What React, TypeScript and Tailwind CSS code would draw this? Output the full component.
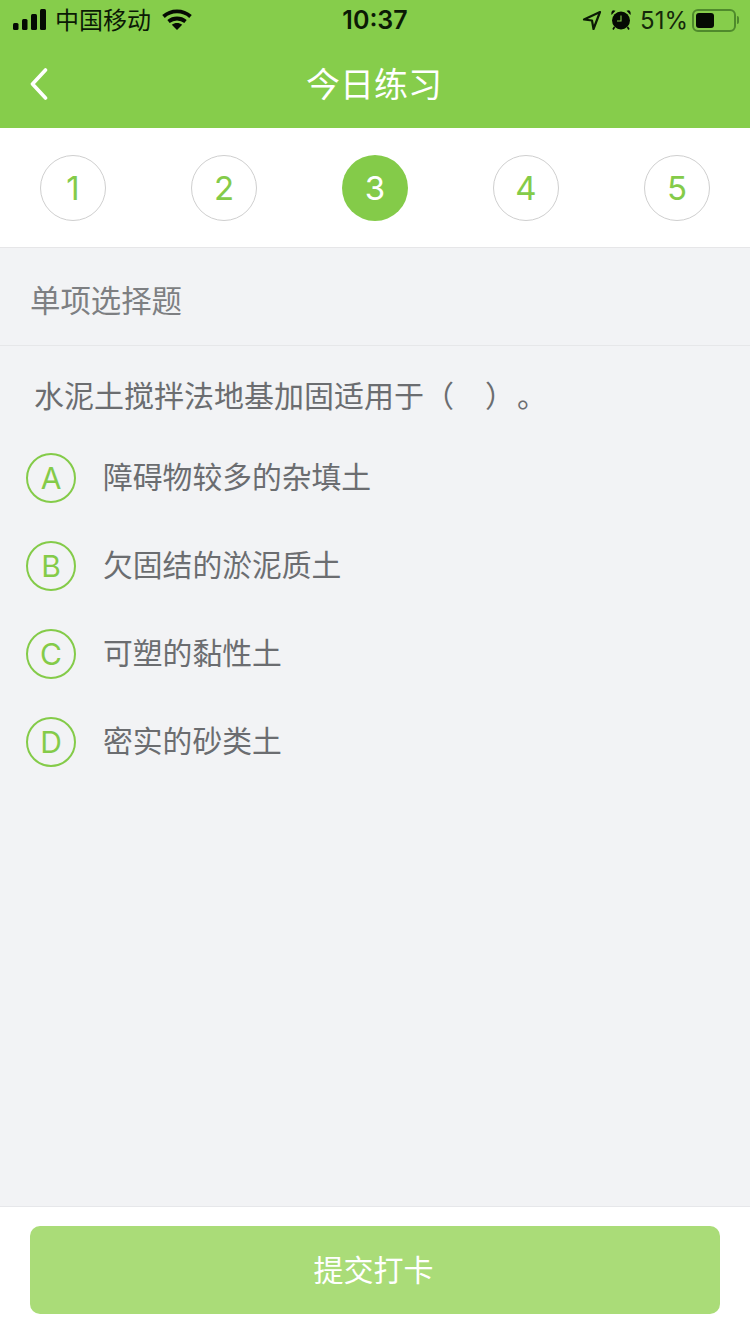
const FONT = "font-['Inter','Noto_Sans_CJK_SC',sans-serif]";

function StatusBar() {
  return (
    <div className="h-10 flex items-center justify-between relative text-[#0b1a05]">
      <div className="flex items-center pl-[13px]">
        <svg width="33" height="22" viewBox="0 0 33 22" fill="#050a03">
          <rect x="0" y="14" width="5.5" height="7" rx="1.5" />
          <rect x="9" y="10" width="5.5" height="11" rx="1.5" />
          <rect x="18" y="5" width="6" height="16" rx="1.5" />
          <rect x="27" y="0" width="6" height="21" rx="1.5" />
        </svg>
        <span className="ml-[9px] text-[24px] leading-none pt-[1px]">中国移动</span>
        <svg className="ml-[11px]" width="30" height="22" viewBox="0 0 30 22" fill="none" stroke="#050a03" strokeWidth="3.8">
          <path d="M1.5 7.5C9 0.7 21 0.7 28.5 7.5" />
          <path d="M6.5 12.5C11.5 8.5 18.5 8.5 23.5 12.5" />
          <path d="M15 21L9.8 15.8C12.8 13.4 17.2 13.4 20.2 15.8Z" fill="#050a03" stroke="none" />
        </svg>
      </div>
      <span className="absolute left-0 right-0 text-center text-[25px] font-semibold leading-none pointer-events-none pt-[1px]">10:37</span>
      <div className="flex items-center pr-[11px]">
        <svg width="20" height="21" viewBox="0 0 20 21" fill="none" stroke="#0b1a05" strokeWidth="2.2" strokeLinejoin="round">
          <path d="M18 2L2 9.5L10 10.5L11.5 19Z" />
        </svg>
        <svg className="ml-[8px]" width="22" height="22" viewBox="0 0 22 22" fill="#050a03">
          <circle cx="11" cy="11.5" r="9" />
          <path d="M1.5 6L5.5 1.8L3 1.2Q0.8 2.5 1.5 6ZM20.5 6L16.5 1.8L19 1.2Q21.2 2.5 20.5 6Z" />
          <path d="M11 6.5V12H7" fill="none" stroke="#86cd4b" strokeWidth="1.1" />
          <path d="M4.5 18L3 20.5M17.5 18L19 20.5" stroke="#050a03" strokeWidth="1.6" />
        </svg>
        <span className="ml-[8px] text-[24px] leading-none text-[#14280a] pt-[1px]">51%</span>
        <div className="ml-[4px] w-[44px] h-[23px] rounded-[6px] border-2 border-[#4f8a2c] p-[2px] flex">
          <div className="w-[18px] rounded-[3px] bg-[#050a03]" />
        </div>
        <div className="ml-[1px] w-[2px] h-[8px] rounded-r-sm bg-[#4f8a2c]" />
      </div>
    </div>
  );
}

function Step({ n, active }: { n: number; active?: boolean }) {
  return (
    <div
      className={
        active
          ? "w-[66px] h-[66px] rounded-full bg-[#84cb49] text-white flex items-center justify-center text-[33px] leading-none"
          : "w-[66px] h-[66px] rounded-full border border-[#cfcfcf] text-[#84cb49] flex items-center justify-center text-[33px] leading-none"
      }
    >
      {n}
    </div>
  );
}

function Option({ letter, text }: { letter: string; text: string }) {
  return (
    <div className="h-[88px] flex items-center pl-[26px]">
      <div className="w-[50px] h-[50px] rounded-full border-2 border-[#84cb49] text-[#84cb49] flex items-center justify-center text-[30px] leading-none shrink-0">
        {letter}
      </div>
      <span className="ml-[27px] text-[29.8px] leading-none text-[#6b6d70]">{text}</span>
    </div>
  );
}

export default function App() {
  return (
    <div className={`${FONT} w-[750px] h-[1334px] bg-[#f2f3f5] flex flex-col overflow-hidden`}>
      <div className="h-32 bg-[#86cd4b] shrink-0">
        <StatusBar />
        <div className="h-[88px] flex items-center relative">
          <svg className="ml-[30px] -mt-[1px]" width="18" height="32" viewBox="0 0 18 32" fill="none" stroke="#fff" strokeWidth="3.6" strokeLinecap="round" strokeLinejoin="round">
            <path d="M15.5 2L2.5 16L15.5 30" />
          </svg>
          <span className="absolute left-0 right-0 text-center text-[34px] leading-none text-white pr-[2px] pt-[1px]">今日练习</span>
        </div>
      </div>

      <div className="h-[120px] bg-white border-b border-[#e6e6e8] shrink-0 flex items-center justify-between px-10 pt-[1px]">
        <Step n={1} />
        <Step n={2} />
        <Step n={3} active />
        <Step n={4} />
        <Step n={5} />
      </div>

      <div className="h-[98px] border-b border-[#e6e7e9] shrink-0 flex items-center pl-[30px] pt-[10px] text-[30.4px] leading-none text-[#7d7f82]">
        单项选择题
      </div>

      <div className="flex-1">
        <div className="pl-[34px] pt-[35px] text-[30px] leading-none text-[#6b6d70] h-[88px] whitespace-pre">
          水泥土搅拌法地基加固适用于（<span className="inline-block w-[31px]" />）<span className="inline-block w-[2px]" />。
        </div>
        <Option letter="A" text="障碍物较多的杂填土" />
        <Option letter="B" text="欠固结的淤泥质土" />
        <Option letter="C" text="可塑的黏性土" />
        <Option letter="D" text="密实的砂类土" />
      </div>

      <div className="h-[128px] bg-white border-t border-[#e6e7ea] shrink-0 pt-[19px] px-[30px]">
        <button className="w-full h-[88px] rounded-[10px] bg-[#aadc78] text-white text-[30px] leading-none flex items-center justify-center pr-[3px]">
          提交打卡
        </button>
      </div>
    </div>
  );
}
